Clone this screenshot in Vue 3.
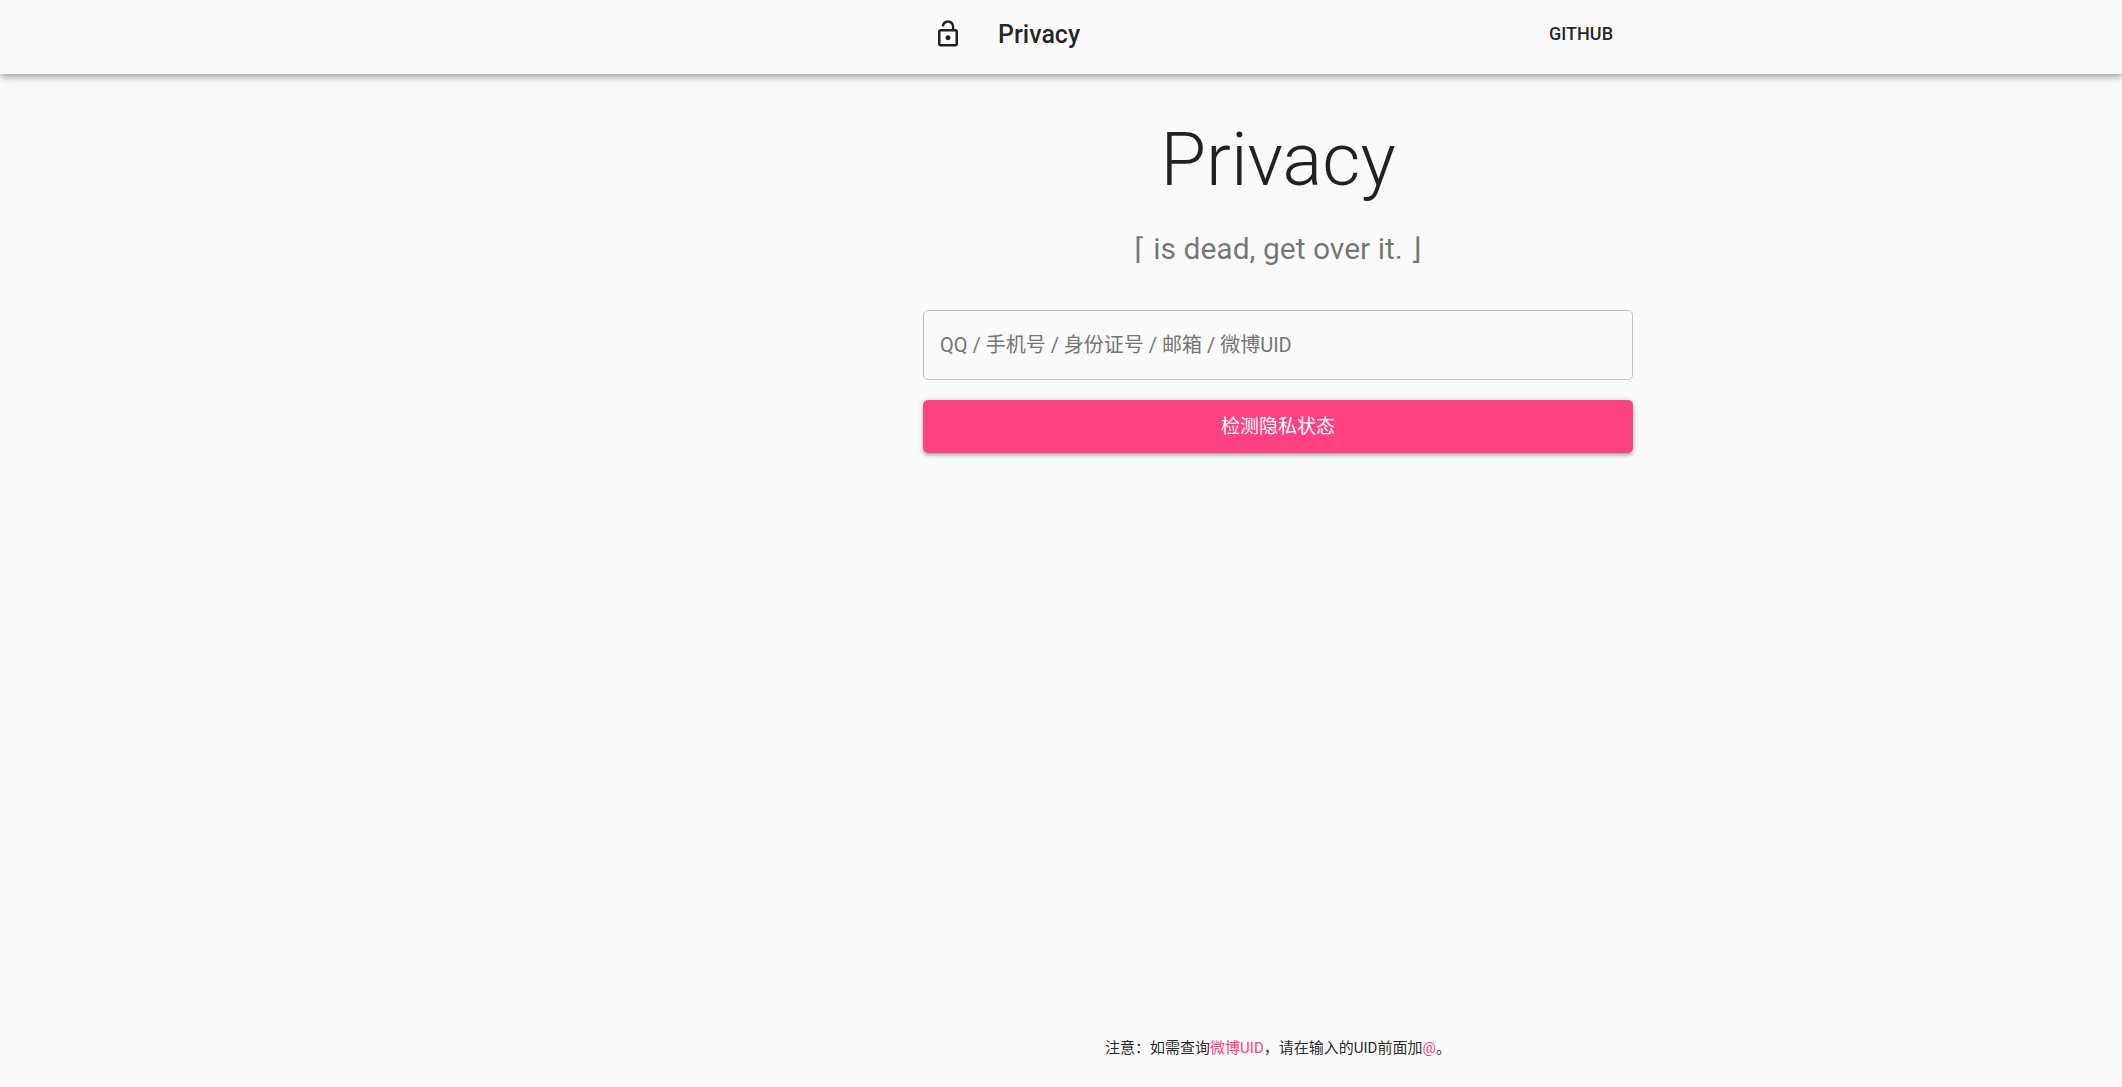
<script setup>
import { ref } from 'vue'

const query = ref('')
</script>

<template>
  <div class="page">
    <header class="bar">
      <div class="column toolbar">
        <button class="icon-button" type="button" aria-label="Home">
          <svg viewBox="0 0 24 24" aria-hidden="true">
            <path d="M12 17c1.100 0 2-.9 2-2s-.9-2-2-2-2 .9-2 2 .9 2 2 2zm6-9h-1V6c0-2.760-2.240-5-5-5S7 3.240 7 6h1.900c0-1.710 1.390-3.100 3.100-3.100 1.710 0 3.100 1.390 3.100 3.100v2H6c-1.100 0-2 .9-2 2v10c0 1.100.9 2 2 2h12c1.100 0 2-.9 2-2V10c0-1.100-.9-2-2-2zm0 12H6V10h12v10z" />
          </svg>
        </button>
        <span class="brand">Privacy</span>
        <a class="link" href="#">GITHUB</a>
      </div>
    </header>

    <main class="column">
      <h1>Privacy</h1>
      <p class="tagline">⌈ is dead, get over it. ⌋</p>
      <form @submit.prevent>
        <input
          v-model="query"
          type="text"
          aria-label="QQ / 手机号 / 身份证号 / 邮箱 / 微博UID"
          placeholder="QQ / 手机号 / 身份证号 / 邮箱 / 微博UID"
        />
        <button class="submit" type="submit">检测隐私状态</button>
      </form>
    </main>

    <footer class="column">
      注意：如需查询<span class="accent">微博UID</span>，请在输入的UID前面加<span class="accent">@</span>。
    </footer>
  </div>
</template>

<style>
body {
  background: #fafafa;
}
</style>

<style scoped>
.page {
  display: flex;
  flex-direction: column;
  min-height: 100vh;
  color: rgba(0, 0, 0, 0.87);
  font-family: Roboto, "Noto Sans CJK SC", sans-serif;
}

.bar,
main,
footer {
  box-sizing: border-box;
}

.bar {
  height: 74px;
  padding-left: 434px;
  background: #fafafa;
  box-shadow:
    0 2px 5px -1px rgba(0, 0, 0, 0.2),
    0 5px 6px 0 rgba(0, 0, 0, 0.14),
    0 1px 12px 0 rgba(0, 0, 0, 0.12);
}

.column {
  width: 710px;
  max-width: 100%;
  margin: 0 auto;
}

.page > .column {
  width: 100%;
  max-width: 1144px;
  padding-left: 434px;
}

.toolbar {
  display: flex;
  align-items: center;
  height: 68px;
}

.icon-button {
  display: flex;
  padding: 10px;
  border: 0;
  background: none;
  color: inherit;
}

.icon-button svg {
  width: 30px;
  height: 30px;
  fill: currentColor;
}

.brand {
  flex: 1;
  margin-left: 25px;
  font-size: 25px;
  font-weight: 500;
}

.link {
  padding: 8px 20px 10px;
  color: inherit;
  font-size: 18px;
  font-weight: 500;
  text-decoration: none;
}

h1 {
  margin: 41px 0 0;
  font-size: 74px;
  font-weight: 300;
  line-height: 90px;
  text-align: center;
}

.tagline {
  margin: 24px 0 0;
  color: rgba(0, 0, 0, 0.54);
  font-size: 30px;
  line-height: 40px;
  text-align: center;
}

form {
  display: flex;
  flex-direction: column;
  gap: 20px;
  margin-top: 41px;
}

input {
  box-sizing: border-box;
  height: 70px;
  padding: 0 16px;
  border: 1px solid #c0c0c0;
  border-radius: 5px;
  outline: 0;
  background: none;
  color: inherit;
  font: inherit;
  font-size: 20px;
}

input::placeholder {
  color: #757575;
  opacity: 1;
}

.submit {
  height: 53px;
  padding: 0 0 5px;
  border: 0;
  border-radius: 5px;
  background: #ff4081;
  box-shadow:
    0 1px 6px rgba(0, 0, 0, 0.2),
    0 3px 3px rgba(0, 0, 0, 0.14),
    0 4px 1px -3px rgba(0, 0, 0, 0.12);
  color: #fff;
  font: inherit;
  font-size: 19px;
}

footer.column {
  margin-top: auto;
  padding-bottom: 26px;
  font-size: 15px;
  line-height: 26px;
  text-align: center;
}

.accent {
  color: #ff4081;
}
</style>
